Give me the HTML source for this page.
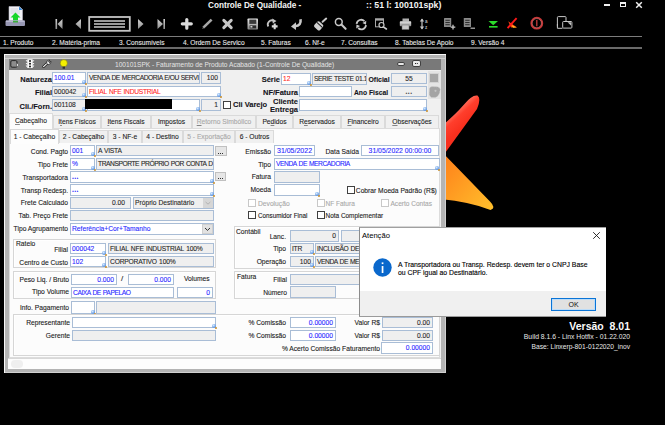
<!DOCTYPE html>
<html><head><meta charset="utf-8">
<style>
html,body{margin:0;padding:0}
body{width:665px;height:425px;background:#000;position:relative;overflow:hidden;font-family:"Liberation Sans",sans-serif}
.a{position:absolute}
.t{position:absolute;white-space:nowrap;font-size:6.7px;line-height:13px;color:#202020}
.r{text-align:right}
.b{font-weight:bold;font-size:7.5px;line-height:15px;color:#141420}
.f{position:absolute;box-sizing:border-box;border:1px solid #a9bdd6;background:#fff;font-size:6.7px;line-height:10px;padding:0 1px;white-space:nowrap;overflow:hidden;color:#282828}
.ro{background:#efefef}
.bl{color:#2a2aff}
.rd{color:#ff2a2a}
.lk{position:absolute;width:4px;height:4px;border-radius:50%;background:radial-gradient(circle at 40% 35%,#d8ecff 0,#6a9ee6 60%,#3d74c8 100%)}
.lk::after{content:"";position:absolute;left:3.2px;top:3.2px;width:1.8px;height:1.8px;border-radius:50%;background:#c89030}
.cb{position:absolute;box-sizing:border-box;width:8px;height:8px;border:1px solid #404040;background:#fff}
.cbd{border-color:#c8c8c8}
.gb{position:absolute;box-sizing:border-box;border:1px solid #d6d6d6;box-shadow:inset 1px 1px 0 #fff}
.tab{position:absolute;box-sizing:border-box;border:1px solid #dadada;border-bottom:none;background:#f0f0f0;font-size:6.7px;line-height:12px;text-align:center;color:#1e1e1e;white-space:nowrap}
.tab.on{background:#fcfcfc}
.dis{color:#a8a8a8}
.up{letter-spacing:-0.25px;word-spacing:0.6px}
.mn{position:absolute;top:37px;font-size:6.6px;line-height:11px;color:#e8e8e8;white-space:nowrap}
.dd{position:absolute;box-sizing:border-box;width:11px;background:#e4e4e4;border-left:1px solid #d0d0d0}
.t,.f,.tab,.mn{-webkit-text-stroke:0.1px currentColor}
u{text-decoration-thickness:0.6px;text-decoration-color:rgba(0,0,0,0.45);text-underline-offset:0.5px}
.f.r{padding-right:2px}
</style></head><body>

<!-- ===== top app bar ===== -->
<div id="topbar">
<div class="a" style="left:0;top:36px;width:642px;height:1px;background:#7c7c7c"></div>
<div class="a" style="left:0;top:47px;width:642px;height:2px;background:#6a6a6a"></div>
<div class="a" style="left:208px;top:0px;font-size:8.2px;line-height:11px;font-weight:bold;color:#f4f4f4;white-space:nowrap">Controle De Qualidade -</div>
<div class="a" style="left:366px;top:0px;font-size:8.75px;line-height:11px;font-weight:bold;color:#f4f4f4;white-space:nowrap">:: 51 l: 100101spk)</div>
<!-- window buttons -->
<div class="a" style="left:604px;top:4px;width:6px;height:2px;background:#f0f0f0"></div>
<div class="a" style="left:620px;top:2px;width:6px;height:5px;box-sizing:border-box;border:1px solid #f0f0f0;border-top-width:2px"></div>
<svg class="a" style="left:635px;top:1px" width="8" height="8" viewBox="0 0 8 8"><path d="M1.2 1.2L6.8 6.8M6.8 1.2L1.2 6.8" stroke="#f0f0f0" stroke-width="1.5"/></svg>
<!-- toolbar icons -->
<svg class="a" style="left:0;top:0" width="665" height="36" viewBox="0 0 665 36">
<defs>
<linearGradient id="gg" x1="0" y1="0" x2="0" y2="1"><stop offset="0" stop-color="#e8e8e8"/><stop offset="1" stop-color="#8a8a8a"/></linearGradient>
<linearGradient id="gv" x1="0" y1="0" x2="0" y2="1"><stop offset="0" stop-color="#d0d0d0"/><stop offset="1" stop-color="#909090"/></linearGradient>
</defs>
<!-- app icon -->
<path d="M9 6.5H19.5L22.5 9.5V21H9Z" fill="#f2f2f6" stroke="#b8b8c8" stroke-width="0.6"/>
<path d="M19 6.5L22.5 10H19Z" fill="#3a8ad8"/>
<path d="M10.5 9H18M10.5 11H20M10.5 13H20" stroke="#c0c0d0" stroke-width="0.6"/>
<path d="M15.5 12.5L20.5 17.5H18V22H13V17.5H10.5Z" fill="#19d62a"/>
<rect x="5.5" y="20.5" width="19.5" height="5.5" rx="1" fill="#9898b4"/>
<rect x="6" y="20.5" width="18.5" height="1.5" fill="#b8b8d0"/>
<rect x="13" y="21" width="5" height="1.5" fill="#3cae3c"/>
<!-- nav -->
<g fill="url(#gv)">
<rect x="55.5" y="19" width="1.6" height="10"/>
<path d="M62.5 19V29L57.5 24Z"/>
<path d="M81 19V29L75.5 24Z"/>
<path d="M138 19V29L143.5 24Z"/>
<path d="M157.5 19V29L163 24Z"/>
<rect x="163.4" y="19" width="1.6" height="10"/>
</g>
<rect x="89.2" y="17" width="40.6" height="13.8" fill="none" stroke="#c4c4c4" stroke-width="1.8"/>
<path d="M94 21H125M94 24H125M94 27H125" stroke="#cdcdcd" stroke-width="1.3"/>
<!-- plus -->
<path d="M186.8 19.5V28.2M182.3 23.8H191.3" stroke="#dcdcdc" stroke-width="3.2" stroke-linecap="round"/>
<!-- pencil -->
<path d="M203.3 27.6L211.6 19.6" stroke="#a8a8a8" stroke-width="2.6"/>
<path d="M202 29L203.5 26.5L204.8 27.8Z" fill="#8a8a8a"/>
<!-- X -->
<path d="M223.8 20.4L231.2 27.6M231.2 20.4L223.8 27.6" stroke="#c8c8c8" stroke-width="3" stroke-linecap="round"/>
<!-- floppy -->
<rect x="247.5" y="18.5" width="10.5" height="11" rx="0.8" fill="url(#gg)"/>
<rect x="249.3" y="19.6" width="7" height="4.3" fill="#3a3a3a"/>
<rect x="249.6" y="25.4" width="6.5" height="3" fill="#2a2a2a"/>
<rect x="250.4" y="26" width="2" height="1.6" fill="#d0d0d0"/>
<!-- redo plus -->
<path d="M268.3 26.5A4.2 4.2 0 0 1 273.8 20.7" fill="none" stroke="#c4c4c4" stroke-width="1.8"/>
<path d="M272.2 18.6L276.5 20.9L272.8 23.6Z" fill="#c4c4c4"/>
<path d="M274.7 23.5V29.3M271.8 26.4H277.6" stroke="#dadada" stroke-width="2.1"/>
<!-- undo arrow -->
<path d="M300.5 19.2Q301.5 25.8 295 26.2" fill="none" stroke="#c8c8c8" stroke-width="2.6"/>
<path d="M291 26.4L296 22.2V30Z" fill="#c8c8c8"/>
<!-- broom -->
<path d="M322.6 21.8L326.2 18.6" stroke="#c8c8c8" stroke-width="2" stroke-linecap="round"/>
<g transform="rotate(42 319 25.5)"><rect x="315.2" y="22.2" width="7.6" height="7.6" rx="1.8" fill="#d0d0d0"/><rect x="315" y="24.2" width="8" height="0.9" fill="#111"/></g>
<!-- magnifier -->
<circle cx="338.8" cy="22" r="3.4" fill="none" stroke="#c8c8c8" stroke-width="1.5"/>
<path d="M341.4 24.6L345.6 28.8" stroke="#c8c8c8" stroke-width="2.1" stroke-linecap="round"/>
<!-- refresh -->
<path d="M356.6 23.8A4.6 4.6 0 0 1 364.4 21.1" fill="none" stroke="#c8c8c8" stroke-width="1.8"/>
<path d="M366.3 20.7L366 24.7L362.4 23.1Z" fill="#c8c8c8"/>
<path d="M366 25.2A4.6 4.6 0 0 1 358.2 28" fill="none" stroke="#c8c8c8" stroke-width="1.8"/>
<path d="M356.2 28.4L356.5 24.4L360.1 26Z" fill="#c8c8c8"/>
<!-- window search -->
<rect x="375.5" y="18.8" width="8" height="8" fill="none" stroke="#a8a8a8" stroke-width="1"/>
<rect x="375.5" y="18.8" width="8" height="1.8" fill="#a8a8a8"/>
<circle cx="381.5" cy="25" r="2.5" fill="#000" stroke="#c8c8c8" stroke-width="1.2"/>
<path d="M383.3 26.8L386.4 29" stroke="#c8c8c8" stroke-width="1.6" stroke-linecap="round"/>
<!-- printer -->
<rect x="402.5" y="18.5" width="6.5" height="3" fill="#b0b0b0"/>
<rect x="399.8" y="21.3" width="11.4" height="5" rx="0.8" fill="url(#gg)"/>
<rect x="402" y="25" width="7" height="4.5" fill="#c8c8c8" stroke="#6a6a6a" stroke-width="0.5"/>
<!-- sort -->
<path d="M422 19V29" stroke="#c4c4c4" stroke-width="1.2"/>
<path d="M419.8 21.4L422 18.6L424.2 21.4ZM419.8 26.6L422 29.4L424.2 26.6Z" fill="#c4c4c4"/>
<text x="425" y="23" font-size="4.6" fill="#b8b8b8" font-family="Liberation Sans" font-weight="bold">a</text>
<text x="425" y="29" font-size="4.6" fill="#b8b8b8" font-family="Liberation Sans" font-weight="bold">z</text>
<!-- doc plus -->
<rect x="444" y="18" width="7.2" height="9" rx="0.6" fill="#8a8a8a"/>
<path d="M445.4 20.3H449.8M445.4 22.5H449.8M445.4 24.7H449.8" stroke="#222" stroke-width="0.9"/>
<path d="M453 24.8V29.4M450.7 27.1H455.3" stroke="#c8c8c8" stroke-width="1.3"/>
<!-- doc minus -->
<rect x="463.8" y="18" width="7.2" height="9" rx="0.6" fill="#8a8a8a"/>
<path d="M465.2 20.3H469.6M465.2 22.5H469.6M465.2 24.7H469.6" stroke="#222" stroke-width="0.9"/>
<path d="M470.5 28.2H475" stroke="#b8b8b8" stroke-width="1.2"/>
<!-- green down -->
<path d="M488.5 21H498L493.2 25.3Z" fill="#2bdc2b"/>
<rect x="489" y="26" width="8.6" height="1.6" fill="#2bdc2b"/>
<!-- red logo -->
<path d="M508.2 21.2L516.8 27.2L511 27.6Z" fill="#ff4010"/>
<path d="M511.5 25L517 27.4L513 27.8Z" fill="#ffc020"/>
<path d="M507.6 28.2L516.6 18.2" stroke="#ff1818" stroke-width="1.9"/>
<!-- power -->
<circle cx="536.8" cy="23.2" r="5.5" fill="none" stroke="#c83838" stroke-width="1.8"/>
<circle cx="536.8" cy="23.2" r="4.6" fill="none" stroke="#e89090" stroke-width="0.5"/>
<path d="M536.8 20V26.3" stroke="#c83c3c" stroke-width="1.3"/>
<!-- window switch -->
<path d="M557.4 26.5V17.5Q557.4 16.6 558.3 16.6H565.3Q566 16.6 566 17.5V21.3" fill="none" stroke="#c8c8c8" stroke-width="1"/>
<path d="M557.4 24V28.3H562.5" fill="none" stroke="#c8c8c8" stroke-width="1"/>
<rect x="562.7" y="21.5" width="9.2" height="6.6" rx="0.8" fill="none" stroke="#c8c8c8" stroke-width="1"/>
<path d="M567.5 22.3L571 25.5L571 22.3Z" fill="#c0c0c0"/>
</svg>
<!-- menus -->
<div class="mn" style="left:3px">1. Produto</div>
<div class="mn" style="left:52px">2. Matéria-prima</div>
<div class="mn" style="left:119px">3. Consumíveis</div>
<div class="mn" style="left:183px">4. Ordem De Servico</div>
<div class="mn" style="left:261px">5. Faturas</div>
<div class="mn" style="left:305px">6. Nf-e</div>
<div class="mn" style="left:341px">7. Consultas</div>
<div class="mn" style="left:395px">8. Tabelas De Apoio</div>
<div class="mn" style="left:471px">9. Versão 4</div>
</div>

<!-- ===== logo ===== -->
<svg class="a" style="left:430px;top:85px" width="80" height="135" viewBox="430 85 80 135">
<defs>
<linearGradient id="og" x1="0" y1="0" x2="1" y2="1"><stop offset="0" stop-color="#ff7a18"/><stop offset="1" stop-color="#ffc02c"/></linearGradient>
</defs>
<linearGradient id="rg" gradientUnits="userSpaceOnUse" x1="455" y1="112" x2="466" y2="124"><stop offset="0" stop-color="#ff6a58"/><stop offset="0.35" stop-color="#ff3e2c"/><stop offset="1" stop-color="#f8301e"/></linearGradient>
<path d="M440 127.5 Q455 115 464.5 104 Q472 94.5 477.5 95.5 Q481.5 98.5 477 109 L440 160 Z" fill="url(#rg)"/>
<path d="M440 150 L490 201.5 Q496.5 208 490.5 210 Q471 202 440 199 Z" fill="url(#og)"/>
</svg>

<!-- ===== version text ===== -->
<div class="a" style="left:530px;top:319px;width:100px;text-align:right;font-size:10.5px;line-height:14px;font-weight:bold;color:#fafafa;white-space:pre">Versão  8.01</div>
<div class="a" style="left:480px;top:332px;width:150px;text-align:right;font-size:6.8px;line-height:10px;color:#e8e8e8;white-space:nowrap">Build 8.1.6 - Linx Hotfix - 01.22.020</div>
<div class="a" style="left:480px;top:341.5px;width:150px;text-align:right;font-size:6.7px;line-height:10px;color:#e8e8e8;white-space:nowrap">Base: Linxerp-801-0122020_inov</div>

<!-- ===== main window ===== -->
<div id="win" class="a" style="left:4px;top:54px;width:442px;height:319px;background:#b4b4b4;box-shadow:inset 1px 1px 0 #f8f8f8,inset -1px -1px 0 #d0d0d0">
</div>
<!-- title bar -->
<div class="a" style="left:5px;top:58px;width:440px;height:1px;background:#d2d2d2"></div><div class="a" style="left:9px;top:59px;width:432px;height:11px;background:#797979"></div>
<div class="a" style="left:115px;top:59px;font-size:6.6px;line-height:11px;color:#e4e4e4;white-space:nowrap">100101SPK - Faturamento de Produto Acabado (1-Controle De Qualidade)</div>
<div class="a" style="left:397px;top:62px;width:8px;height:4px;box-sizing:border-box;border:1px solid #404040;border-radius:2px;background:#e8e8e8"></div>
<div class="a" style="left:412px;top:60px;width:9px;height:7px;box-sizing:border-box;border:1px solid #404040;border-radius:2px;background:#e8e8e8"></div><div class="a" style="left:415px;top:62.5px;width:1.2px;height:1.6px;background:#222;box-shadow:1.8px 0 0 #222"></div>
<svg class="a" style="left:9px;top:59px" width="65" height="11" viewBox="9 59 65 11">
<rect x="10.8" y="60.6" width="6.2" height="6.6" rx="1.3" fill="#8c8c8c" stroke="#1a1a1a" stroke-width="0.9"/>
<path d="M16.5 62.8L19 65L16.5 67.2Z" fill="#f0f0f0" stroke="#222" stroke-width="0.4"/>
<path d="M27.4 59.2H32.6V68H27.4Z" fill="#fafafa"/>
<path d="M25.6 60.2H27.6V62.6ZM25.6 62.9H27.6V65.3ZM25.6 65.6H27.6V68ZM34.4 60.2H32.4V62.6ZM34.4 62.9H32.4V65.3ZM34.4 65.6H32.4V68Z" fill="#fafafa"/>
<circle cx="30" cy="61" r="1" fill="#111"/><circle cx="30" cy="63.8" r="1" fill="#111"/><circle cx="30" cy="66.6" r="1" fill="#111"/>
<path d="M43.6 66.6L48 62.4" stroke="#111" stroke-width="2.6" stroke-linecap="round"/>
<path d="M43.6 66.6L48 62.4" stroke="#f4f4f4" stroke-width="1.3" stroke-linecap="round"/>
<path d="M46.6 63.4Q46 60.6 49 60L49.8 60.2L48.6 61.6L49.4 62.6L51 61.4Q51.4 64.2 48.2 64.6Z" fill="#f4f4f4" stroke="#111" stroke-width="0.7"/>
<circle cx="63.8" cy="63.2" r="3.6" fill="#f4f000" stroke="#6a6a20" stroke-width="0.5"/>
<rect x="62.6" y="66.6" width="2.4" height="2.2" fill="#333"/>
</svg>
<!-- body -->
<div class="a" style="left:9px;top:70px;width:432px;height:299px;background:#f0f0f0"></div>


<!-- header fields -->
<div class="t r b" style="left:10px;top:72px;width:42px">Natureza</div>
<div class="t r b" style="left:10px;top:85px;width:42px">Filial</div>
<div class="t r b" style="left:10px;top:99px;width:42px">Cli./Forn.</div>
<div class="f bl" style="left:52px;top:72px;width:34px;height:12px">100.01</div><div class="lk" style="left:82px;top:80px"></div>
<div class="f ro up" style="letter-spacing:-0.45px;left:87px;top:72px;width:113px;height:12px">VENDA DE MERCADORIA E/OU SERVI</div>
<div class="f ro r" style="left:201px;top:72px;width:20px;height:12px">100</div>
<div class="f ro" style="left:52px;top:86px;width:34px;height:11px">000042</div><div class="lk" style="left:82px;top:93px"></div>
<div class="f rd up" style="letter-spacing:-0.29px;left:87px;top:86px;width:134px;height:11px">FILIAL NFE INDUSTRIAL</div><div class="lk" style="left:217px;top:93px"></div>
<div class="f ro" style="left:52px;top:99px;width:34px;height:12px">001108</div><div class="lk" style="left:82px;top:107px"></div>
<div class="f" style="left:87px;top:99px;width:113px;height:12px"></div><div class="lk" style="left:196px;top:107px"></div>
<div class="a" style="left:85px;top:99px;width:87px;height:10px;background:#000"></div>
<div class="f ro r" style="left:201px;top:99px;width:20px;height:12px">1</div>
<div class="cb" style="left:223px;top:101px"></div>
<div class="t b" style="left:233px;top:97px">Cli Varejo</div>
<div class="t r b" style="left:240px;top:72px;width:40px">Série</div>
<div class="f rd" style="left:281px;top:73px;width:30px;height:12px">12</div><div class="lk" style="left:307px;top:81px"></div>
<div class="f ro up" style="letter-spacing:-0.4px;left:312px;top:73px;width:55px;height:12px;padding:0 0 0 1px">SERIE TESTE 01.1</div>
<div class="t b" style="left:368.5px;top:72px;font-size:6.9px">Oficial</div>
<div class="f ro" style="left:391px;top:73px;width:36px;height:11px;text-align:center">55</div>
<div class="a" style="left:428px;top:71px;width:13px;height:28px;background:#e4e4e4"></div>
<div class="a" style="left:429px;top:73px;width:10px;height:10px;background:#a6a6a6;border:1px solid #d4d4d4;box-sizing:border-box"></div>
<svg class="a" style="left:428px;top:85px" width="13" height="14" viewBox="428 85 13 14"><path d="M429.5 88.5Q430 86.8 432 86.6L437.5 86.8Q440 87.4 440.2 89.5L439.6 93Q438.6 96.2 435.5 97.4L431.5 97.6Q429.4 96.5 429.2 94Z" fill="#a4a4a4" stroke="#d0d0d0" stroke-width="0.6" stroke-dasharray="1 0.8"/><circle cx="435.5" cy="90.8" r="1.1" fill="#c4c4c4"/></svg>
<div class="t r b" style="left:250px;top:84.5px;width:48px">NF/Fatura</div>
<div class="f" style="left:299px;top:86px;width:53px;height:11px"></div>
<div class="t b" style="left:354px;top:85px;font-size:6.75px">Ano Fiscal</div>
<div class="f ro" style="left:391px;top:86px;width:36px;height:11px;text-align:center;font-weight:bold;letter-spacing:0.5px;color:#444">...</div>
<div class="t r b" style="left:250px;top:98px;width:48px;line-height:8px">Cliente<br>Entrega</div>
<div class="f" style="left:299px;top:99px;width:128px;height:12px"></div><div class="lk" style="left:423px;top:107px"></div>

<!-- tab control 1 -->
<div class="a" style="left:9px;top:128px;width:431px;height:230px;background:#fcfcfc;border:1px solid #dcdcdc;box-sizing:border-box"></div>
<div class="tab" style="left:53px;top:115px;width:48px;height:13px">I<u>t</u>ens Físicos</div>
<div class="tab" style="left:101px;top:115px;width:50px;height:13px"><u>I</u>tens Fiscais</div>
<div class="tab" style="left:151px;top:115px;width:41px;height:13px">Im<u>p</u>ostos</div>
<div class="tab dis" style="left:192px;top:115px;width:64px;height:13px"><u>R</u>etorno Simbólico</div>
<div class="tab" style="left:256px;top:115px;width:37px;height:13px">Pe<u>d</u>idos</div>
<div class="tab" style="left:293px;top:115px;width:48px;height:13px">R<u>e</u>servados</div>
<div class="tab" style="left:341px;top:115px;width:44px;height:13px"><u>F</u>inanceiro</div>
<div class="tab" style="left:385px;top:115px;width:54px;height:13px"><u>O</u>bservações</div>
<div class="tab on" style="left:9px;top:113px;width:44px;height:16px;border-color:#dcdcdc;line-height:14px;padding-top:0"><u>C</u>abeçalho</div>
<!-- tab control 2 -->
<div class="tab" style="left:59px;top:130px;width:49px;height:13px">2 - Cabeçalho</div>
<div class="tab" style="left:108px;top:130px;width:34px;height:13px">3 - NF-e</div>
<div class="tab" style="left:142px;top:130px;width:41px;height:13px">4 - Destino</div>
<div class="tab dis" style="left:183px;top:130px;width:52px;height:13px">5 - Exportação</div>
<div class="tab" style="left:235px;top:130px;width:39px;height:13px">6 - Outros</div>
<div class="tab on" style="left:10px;top:129px;width:49px;height:15px;background:#fdfdfd;line-height:13px;padding-top:0">1 - Cabeçalho</div>

<!-- page content left column -->
<div class="t r" style="left:12px;top:145px;width:56px">Cond. Pagto</div>
<div class="f bl" style="left:70px;top:145px;width:25px;height:11px">001</div><div class="lk" style="left:91px;top:152px"></div>
<div class="f ro up" style="left:96px;top:145px;width:118px;height:11px">A VISTA</div>
<div class="a" style="left:215px;top:146px;width:12px;height:10px;box-sizing:border-box;border:1px solid #c0c0c0;background:#e6e6e6"></div><div class="a" style="left:218px;top:153px;width:1px;height:1px;background:#333;box-shadow:2px 0 0 #333,4px 0 0 #333"></div>

<div class="t r" style="left:12px;top:158px;width:56px">Tipo Frete</div>
<div class="f bl" style="left:70px;top:158px;width:25px;height:12px">%</div><div class="lk" style="left:91px;top:166px"></div>
<div class="f ro up" style="letter-spacing:-0.45px;left:96px;top:158px;width:118px;height:12px">TRANSPORTE PRÓPRIO POR CONTA D</div>

<div class="t r" style="left:12px;top:171px;width:56px">Transportadora</div>
<div class="f bl" style="left:70px;top:171px;width:144px;height:12px;font-weight:bold;letter-spacing:0.4px">...</div><div class="lk" style="left:210px;top:179px"></div>
<div class="a" style="left:215px;top:172px;width:11px;height:9px;box-sizing:border-box;border:1px solid #c0c0c0;background:#e6e6e6"></div><div class="a" style="left:218px;top:178px;width:1px;height:1px;background:#333;box-shadow:2px 0 0 #333,4px 0 0 #333"></div>

<div class="t r" style="left:12px;top:183.5px;width:56px">Transp Redesp.</div>
<div class="f bl" style="left:70px;top:184px;width:144px;height:12px;font-weight:bold;letter-spacing:0.4px">...</div><div class="lk" style="left:210px;top:192px"></div>

<div class="t r" style="left:12px;top:196px;width:56px">Frete Calculado</div>
<div class="f ro" style="left:70px;top:197px;width:61px;height:12px;text-align:right;padding-right:5px">0.00</div>
<div class="f ro" style="left:133px;top:197px;width:81px;height:12px">Próprio Destinatário</div>
<div class="a" style="left:203px;top:198px;width:10px;height:10px;background:#d6d6d6"></div><svg class="a" style="left:203px;top:198px" width="10" height="10" viewBox="0 0 10 10"><path d="M2.6 4L5 6.2L7.4 4" fill="none" stroke="#a8a8a8" stroke-width="0.8"/></svg>

<div class="t r" style="left:12px;top:208.5px;width:56px">Tab. Preço Frete</div>
<div class="f ro" style="left:70px;top:210px;width:144px;height:11px"></div>

<div class="t r" style="left:12px;top:222px;width:56px">Tipo Agrupamento</div>
<div class="f bl" style="left:70px;top:223px;width:144px;height:12px">Referência+Cor+Tamanho</div>
<div class="a" style="left:202px;top:224px;width:11px;height:10px;background:#e2e2e2;border:1px solid #d0d0d0;box-sizing:border-box"></div><svg class="a" style="left:202px;top:224px" width="11" height="10" viewBox="0 0 11 10"><path d="M3 4L5.5 6.4L8 4" fill="none" stroke="#333" stroke-width="1"/></svg>

<!-- Rateio group -->
<div class="gb" style="left:13px;top:239px;width:203px;height:29px"></div>
<div class="t" style="left:16px;top:237px">Rateio</div>
<div class="t r" style="left:12px;top:243px;width:56px">Filial</div>
<div class="f bl" style="left:70px;top:243px;width:36px;height:11px">000042</div><div class="lk" style="left:102px;top:251px"></div>
<div class="f ro up" style="letter-spacing:-0.16px;left:108px;top:243px;width:106px;height:11px">FILIAL NFE INDUSTRIAL 100%</div>
<div class="t r" style="left:12px;top:256px;width:56px">Centro de Custo</div>
<div class="f bl" style="left:70px;top:256px;width:36px;height:11px">102</div><div class="lk" style="left:102px;top:263px"></div>
<div class="f ro up" style="letter-spacing:-0.19px;left:108px;top:256px;width:106px;height:11px">CORPORATIVO 100%</div>

<!-- Peso group -->
<div class="gb" style="left:13px;top:271px;width:203px;height:28px"></div>
<div class="t r" style="left:12px;top:273px;width:57px">Peso Liq. / Bruto</div>
<div class="f bl r" style="left:71px;top:274px;width:46px;height:11px">0.000</div>
<div class="t" style="left:121px;top:272px;font-size:8px">/</div>
<div class="f bl r" style="left:128px;top:274px;width:46px;height:11px">0.000</div>
<div class="t" style="left:184px;top:272px">Volumes</div>
<div class="t r" style="left:12px;top:285px;width:57px">Tipo Volume</div>
<div class="f bl up" style="letter-spacing:-0.45px;left:71px;top:287px;width:103px;height:11px">CAIXA DE PAPELAO</div>
<div class="f bl r" style="left:177px;top:287px;width:36px;height:11px">0</div>

<div class="t r" style="left:12px;top:301px;width:57px">Info. Pagamento</div>
<div class="f" style="left:71px;top:301px;width:24px;height:13px"></div><div class="lk" style="left:91px;top:310px"></div>
<div class="f ro" style="left:96px;top:301px;width:120px;height:13px"></div>

<!-- Representante group -->
<div class="gb" style="left:13px;top:314px;width:427px;height:42px;border-left-color:#d6d6d6"></div>
<div class="t r" style="left:12px;top:316px;width:58px">Representante</div>
<div class="f" style="left:72px;top:317px;width:144px;height:11px"></div><div class="lk" style="left:212px;top:324px"></div>
<div class="t r" style="left:12px;top:329px;width:58px">Gerente</div>
<div class="f ro" style="left:72px;top:330px;width:144px;height:11px"></div>
<div class="t r" style="left:220px;top:316px;width:66px">% Comissão</div>
<div class="f bl r" style="left:290px;top:317px;width:46px;height:11px">0.00000</div>
<div class="t r" style="left:220px;top:329px;width:66px">% Comissão</div>
<div class="f bl r" style="left:290px;top:330px;width:46px;height:11px">0.00000</div>
<div class="t r" style="left:339px;top:316px;width:41px">Valor R$</div>
<div class="f ro r" style="left:382px;top:317px;width:51px;height:11px">0.00</div>
<div class="t r" style="left:339px;top:329px;width:41px">Valor R$</div>
<div class="f ro r" style="left:382px;top:330px;width:51px;height:11px">0.00</div>
<div class="t r" style="left:250px;top:342px;width:130px">% Acerto Comissão Faturamento</div>
<div class="f bl r" style="left:381px;top:342px;width:52px;height:12px">0.00000</div>

<!-- status bar -->
<div class="a" style="left:8px;top:358px;width:433px;height:11px;background:#fdfdfd;border-top:1px solid #d8d8d8;box-sizing:border-box"></div>
<div class="a" style="left:11px;top:360px;width:12px;height:8px;border-radius:5px;background:#efefef"></div>

<!-- right column -->
<div class="t r" style="left:230px;top:145px;width:41px">Emissão</div>
<div class="f bl" style="left:274px;top:145px;width:41px;height:11px;font-size:7px;padding-left:2px">31/05/2022</div>
<div class="t r" style="left:318px;top:145px;width:41px">Data Saída</div>
<div class="f bl" style="left:361px;top:145px;width:78px;height:11px;text-align:center;font-size:6.85px">31/05/2022 00:00:00</div>
<div class="t r" style="left:230px;top:158px;width:41px">Tipo</div>
<div class="f bl up" style="letter-spacing:-0.44px;left:274px;top:158px;width:166px;height:12px">VENDA DE MERCADORIA</div><div class="lk" style="left:435px;top:166px"></div>
<div class="t r" style="left:230px;top:170px;width:41px">Fatura</div>
<div class="f ro" style="left:274px;top:171px;width:46px;height:12px"></div>
<div class="t r" style="left:230px;top:183px;width:41px">Moeda</div>
<div class="f" style="left:274px;top:184px;width:46px;height:12px"></div><div class="lk" style="left:315px;top:192px"></div>
<div class="cb" style="left:347px;top:186px"></div>
<div class="t" style="left:355.8px;top:184px">Cobrar Moeda Padrão (R$)</div>
<div class="cb cbd" style="left:248px;top:199px"></div>
<div class="t dis" style="left:258px;top:197px">Devolução</div>
<div class="cb cbd" style="left:317px;top:199px"></div>
<div class="t dis" style="left:325.5px;top:197px;font-size:6.5px">NF Fatura</div>
<div class="cb cbd" style="left:381px;top:199px"></div>
<div class="t dis" style="left:390.5px;top:197px;font-size:6.55px">Acerto Contas</div>
<div class="cb" style="left:248px;top:211px"></div>
<div class="t" style="left:258px;top:209px;font-size:6.3px">Consumidor Final</div>
<div class="cb" style="left:317px;top:211px"></div>
<div class="t" style="left:325.5px;top:209px;font-size:6.45px">Nota Complementar</div>

<!-- Contabil group -->
<div class="gb" style="left:234px;top:226px;width:206px;height:43px"></div>
<div class="t" style="left:236px;top:225px">Contábil</div>
<div class="t r" style="left:240px;top:230px;width:46px">Lanc.</div>
<div class="f ro r" style="left:290px;top:230px;width:49px;height:12px">0</div>
<div class="f ro" style="left:341px;top:230px;width:40px;height:12px"></div>
<div class="t r" style="left:240px;top:242px;width:46px">Tipo</div>
<div class="f ro up" style="left:290px;top:243px;width:24px;height:11px">ITR</div><div class="lk" style="left:310px;top:250px"></div>
<div class="f ro up" style="left:315px;top:243px;width:60px;height:11px;letter-spacing:-0.35px">INCLUSÃO DE</div>
<div class="t r" style="left:240px;top:255px;width:46px">Operação</div>
<div class="f ro r" style="left:290px;top:256px;width:24px;height:11px">100</div><div class="lk" style="left:310px;top:263px"></div>
<div class="f ro up" style="left:315px;top:256px;width:60px;height:11px;letter-spacing:-0.44px">VENDA DE MERCADORIA</div>

<!-- Fatura group -->
<div class="gb" style="left:234px;top:271px;width:206px;height:28px"></div>
<div class="t" style="left:237px;top:270px">Fatura</div>
<div class="t r" style="left:240px;top:273px;width:47px">Filial</div>
<div class="f ro" style="left:290px;top:274px;width:100px;height:11px"></div>
<div class="t r" style="left:240px;top:286px;width:47px">Número</div>
<div class="f ro" style="left:290px;top:286px;width:46px;height:12px"></div>

<!-- Atencao dialog -->
<div class="a" style="left:359px;top:227px;width:247px;height:90px;background:#fff;border-left:1px solid #8c8c8c;border-top:1px solid #a0a0a0;box-sizing:border-box"></div>
<div class="a" style="left:360px;top:291px;width:246px;height:25px;background:#f0f0f0"></div>
<div class="a" style="left:359px;top:316px;width:247px;height:1px;background:#9a9a9a"></div>
<div class="a" style="left:362px;top:228.5px;font-size:7.6px;line-height:13px;color:#000;white-space:nowrap">Atenção</div>
<svg class="a" style="left:592px;top:231px" width="9" height="9" viewBox="0 0 9 9"><path d="M1.2 1.2L7.8 7.8M7.8 1.2L1.2 7.8" stroke="#1a1a1a" stroke-width="0.9"/></svg>
<svg class="a" style="left:373px;top:258px" width="19" height="19" viewBox="0 0 19 19"><circle cx="9.5" cy="9.5" r="9.2" fill="#0a68cc"/><rect x="8.7" y="8" width="1.7" height="7" fill="#fff"/><rect x="8.7" y="4.4" width="1.7" height="1.7" fill="#fff"/></svg>
<div class="a" style="left:398px;top:260.5px;font-size:6.85px;line-height:8.5px;color:#000;white-space:nowrap;-webkit-text-stroke:0.12px #000">A Transportadora ou Transp. Redesp. devem ter o CNPJ Base<br>ou CPF igual ao Destinatário.</div>
<div class="a" style="left:551px;top:298px;width:45px;height:13px;box-sizing:border-box;border:1px solid #0a74d6;box-shadow:inset 0 0 0 1px #bcdcf8;background:#e1e1e1;font-size:7px;line-height:11px;text-align:center;color:#111">OK</div>

</body></html>
